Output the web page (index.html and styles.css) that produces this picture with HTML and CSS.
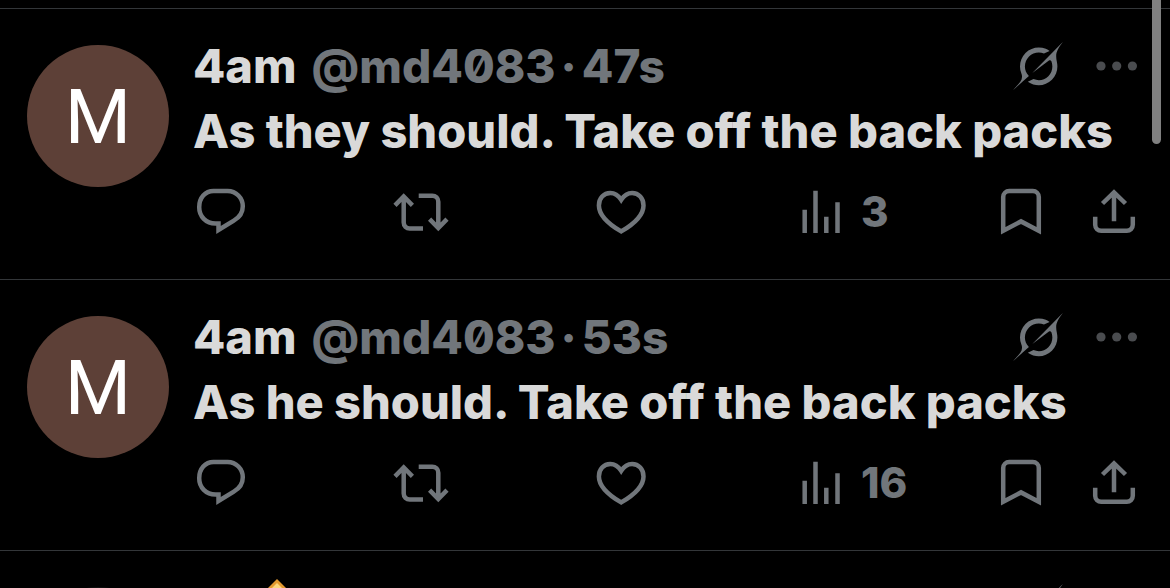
FILE: index.html
```
<!DOCTYPE html>
<html lang="en">
<head>
    <meta charset="UTF-8">
    <meta name="viewport" content="width=device-width, initial-scale=1">
    <title>Timeline</title>
    <link rel="stylesheet" href="styles.css">
</head>
<body>
    <!-- Shared icons -->
    <svg class="sprite" aria-hidden="true">
        <symbol id="icon-grok" viewBox="0 0 33 32">
            <path d="M12.745 20.54l10.97-8.19c.539-.4 1.307-.244 1.564.38 1.349 3.288.746 7.241-1.938 9.955-2.683 2.714-6.417 3.31-9.83 1.954l-3.728 1.745c5.347 3.697 11.84 2.782 15.898-1.324 3.219-3.255 4.216-7.692 3.284-11.693l.008.009c-1.351-5.878.332-8.227 3.782-13.031L33 0l-4.54 4.59v-.014L12.743 20.544m-2.263 1.987c-3.837-3.707-3.175-9.446.1-12.755 2.42-2.449 6.388-3.448 9.852-1.979l3.72-1.737c-.67-.49-1.53-1.017-2.515-1.387-4.455-1.854-9.789-.931-13.41 2.728-3.483 3.523-4.579 8.94-2.697 13.561 1.405 3.454-.899 5.898-3.22 8.364C1.49 30.2.666 31.074 0 32l10.478-9.466"/>
        </symbol>
        <symbol id="icon-more" viewBox="0 0 42 10">
            <circle cx="5" cy="5" r="4.6"/>
            <circle cx="20.7" cy="5" r="4.6"/>
            <circle cx="36.4" cy="5" r="4.6"/>
        </symbol>
        <symbol id="icon-reply" viewBox="0 0 56 56">
            <path d="M20.5 7h14C43.2 7 49.8 13.8 49.8 22.3c0 6.2-3.4 11.2-9 14.3L25.5 46v-6.5h-3C13 39.5 6.2 32.4 6.2 23.2 6.2 13.8 12.2 7 20.5 7z"/>
        </symbol>
        <symbol id="icon-repost" viewBox="0 0 56 56">
            <path d="M2 21.3l8.7-8.8 8.7 8.8M10.7 13v25.6a6 6 0 0 0 6 6H30M25.7 11.7h13.6a6 6 0 0 1 6 6V43M36.6 35.2l8.7 8.8 8.7-8.8"/>
        </symbol>
        <symbol id="icon-like" viewBox="0 0 56 56">
            <path d="M28.2 15.8C25.2 11.2 21.6 9 17.3 9 10.7 9 5.9 14.2 5.9 21.4c0 9.6 8.6 18 22.3 26 13.7-8 22.3-16.4 22.3-26C50.5 14.2 45.7 9 39.1 9c-4.3 0-7.9 2.2-10.9 6.8z"/>
        </symbol>
        <symbol id="icon-views" viewBox="0 0 56 56">
            <path d="M11.7 49V25.7M22.5 49V6.7M33.3 49V32.7M44.5 49V18.3"/>
        </symbol>
        <symbol id="icon-bookmark" viewBox="0 0 56 56">
            <path d="M10.2 46.7V13a6 6 0 0 1 6-6h23.6a6 6 0 0 1 6 6v33.7L28 37.4z"/>
        </symbol>
        <symbol id="icon-share" viewBox="0 0 56 56">
            <path d="M9.2 32.7v8.1a6 6 0 0 0 6 6h25.6a6 6 0 0 0 6-6v-8.1M16.5 19.5L28 8.4l11.5 11.1M28 9v28.3"/>
        </symbol>
        <symbol id="icon-diamond" viewBox="0 0 48 48">
            <path fill="#e39a30" d="M24 0l24 24-24 24L0 24z"/>
            <path fill="#fcd77b" d="M24 4l20 20-20 20L4 24z"/>
        </symbol>
    </svg>

    <main class="timeline">
        <article class="post">
            <div class="avatar">M</div>
            <div class="content">
                <header class="post-header">
                    <a class="name" href="#">4am</a>
                    <a class="handle" href="#">@md4083</a>
                    <span class="dot">·</span>
                    <time class="time">47s</time>
                    <div class="tools">
                        <button class="grok" aria-label="Explain this post"><svg><use href="#icon-grok"/></svg></button>
                        <button class="more" aria-label="More"><svg><use href="#icon-more"/></svg></button>
                    </div>
                </header>
                <p class="text">As they should. Take off the back packs</p>
                <div class="actions">
                    <button class="action" aria-label="Reply"><svg><use href="#icon-reply"/></svg></button>
                    <button class="action" aria-label="Repost"><svg><use href="#icon-repost"/></svg></button>
                    <button class="action" aria-label="Like"><svg><use href="#icon-like"/></svg></button>
                    <button class="action"><svg><use href="#icon-views"/></svg><span>3</span></button>
                    <div class="save">
                        <button aria-label="Bookmark"><svg><use href="#icon-bookmark"/></svg></button>
                        <button aria-label="Share"><svg><use href="#icon-share"/></svg></button>
                    </div>
                </div>
            </div>
        </article>

        <article class="post">
            <div class="avatar">M</div>
            <div class="content">
                <header class="post-header">
                    <a class="name" href="#">4am</a>
                    <a class="handle" href="#">@md4083</a>
                    <span class="dot">·</span>
                    <time class="time">53s</time>
                    <div class="tools">
                        <button class="grok" aria-label="Explain this post"><svg><use href="#icon-grok"/></svg></button>
                        <button class="more" aria-label="More"><svg><use href="#icon-more"/></svg></button>
                    </div>
                </header>
                <p class="text">As he should. Take off the back packs</p>
                <div class="actions">
                    <button class="action" aria-label="Reply"><svg><use href="#icon-reply"/></svg></button>
                    <button class="action" aria-label="Repost"><svg><use href="#icon-repost"/></svg></button>
                    <button class="action" aria-label="Like"><svg><use href="#icon-like"/></svg></button>
                    <button class="action"><svg><use href="#icon-views"/></svg><span>16</span></button>
                    <div class="save">
                        <button aria-label="Bookmark"><svg><use href="#icon-bookmark"/></svg></button>
                        <button aria-label="Share"><svg><use href="#icon-share"/></svg></button>
                    </div>
                </div>
            </div>
        </article>

        <!-- Next post, mostly below the fold -->
        <article class="post">
            <div class="avatar dark"></div>
            <div class="content">
                <header class="post-header">
                    <svg class="emoji"><use href="#icon-diamond"/></svg>
                    <div class="tools">
                        <button class="grok" aria-label="Explain this post"><svg><use href="#icon-grok"/></svg></button>
                        <button class="more" aria-label="More"><svg><use href="#icon-more"/></svg></button>
                    </div>
                </header>
            </div>
        </article>
    </main>
    <div class="scroll-thumb"></div>
</body>
</html>
```
FILE: styles.css
```
:root {
    --bg: #000;
    --line: #333639;
    --text: #d9d9d9;
    --muted: #71767b;
    --avatar: #5d4037;
}

* {
    margin: 0;
    padding: 0;
    box-sizing: border-box;
}

body {
    background: var(--bg);
    color: var(--text);
    font-family: Inter, "Liberation Sans", sans-serif;
    font-size: 47px;
    font-weight: 800;
    line-height: 65px;
}

a {
    color: inherit;
    text-decoration: none;
}

button {
    display: flex;
    align-items: center;
    border: 0;
    background: none;
    color: var(--muted);
    font: inherit;
    cursor: pointer;
}

.sprite {
    position: absolute;
    width: 0;
    height: 0;
}

.timeline {
    height: 100vh;
    padding-top: 8px;
    overflow: hidden;
}

.post {
    display: flex;
    gap: 24px;
    padding: 24px 28px 39px 27px;
    border-top: 1px solid var(--line);
}

.avatar {
    flex: none;
    width: 142px;
    height: 142px;
    margin-top: 12px;
    border-radius: 50%;
    background: var(--avatar);
    color: #fff;
    font-family: Roboto, sans-serif;
    font-size: 76px;
    font-weight: 400;
    line-height: 144px;
    text-align: center;
}

.avatar.dark {
    background: #111;
}

.content {
    flex: 1;
    min-width: 0;
}

.post-header {
    display: flex;
    align-items: baseline;
    height: 65px;
    white-space: nowrap;
}

.handle {
    margin-left: 15px;
}

.handle,
.dot,
.time {
    color: var(--muted);
    font-size: 46px;
    font-feature-settings: "zero";
}

.dot {
    margin: 0 5px;
}

.tools {
    display: flex;
    align-items: center;
    align-self: center;
    gap: 33px;
    margin-left: auto;
    padding-right: 4px;
}

.grok svg {
    width: 50px;
    height: 50px;
    fill: var(--muted);
}

.more svg {
    width: 42px;
    height: 10px;
    fill: #4a4c4f;
}

.text {
    white-space: nowrap;
}

.actions {
    display: flex;
    margin-top: 21px;
    font-size: 42px;
    line-height: 56px;
}

.action {
    flex: 1;
    gap: 12px;
}

.actions svg {
    width: 56px;
    height: 56px;
    fill: none;
    stroke: var(--muted);
    stroke-width: 4.5;
}

.save {
    display: flex;
    gap: 37px;
}

.emoji {
    align-self: center;
    width: 48px;
    height: 48px;
    margin-left: 60px;
    margin-bottom: 10px;
}

.scroll-thumb {
    position: fixed;
    top: 0;
    right: 9px;
    width: 9px;
    height: 144px;
    border-radius: 0 0 5px 5px;
    background: #808080;
}
```
